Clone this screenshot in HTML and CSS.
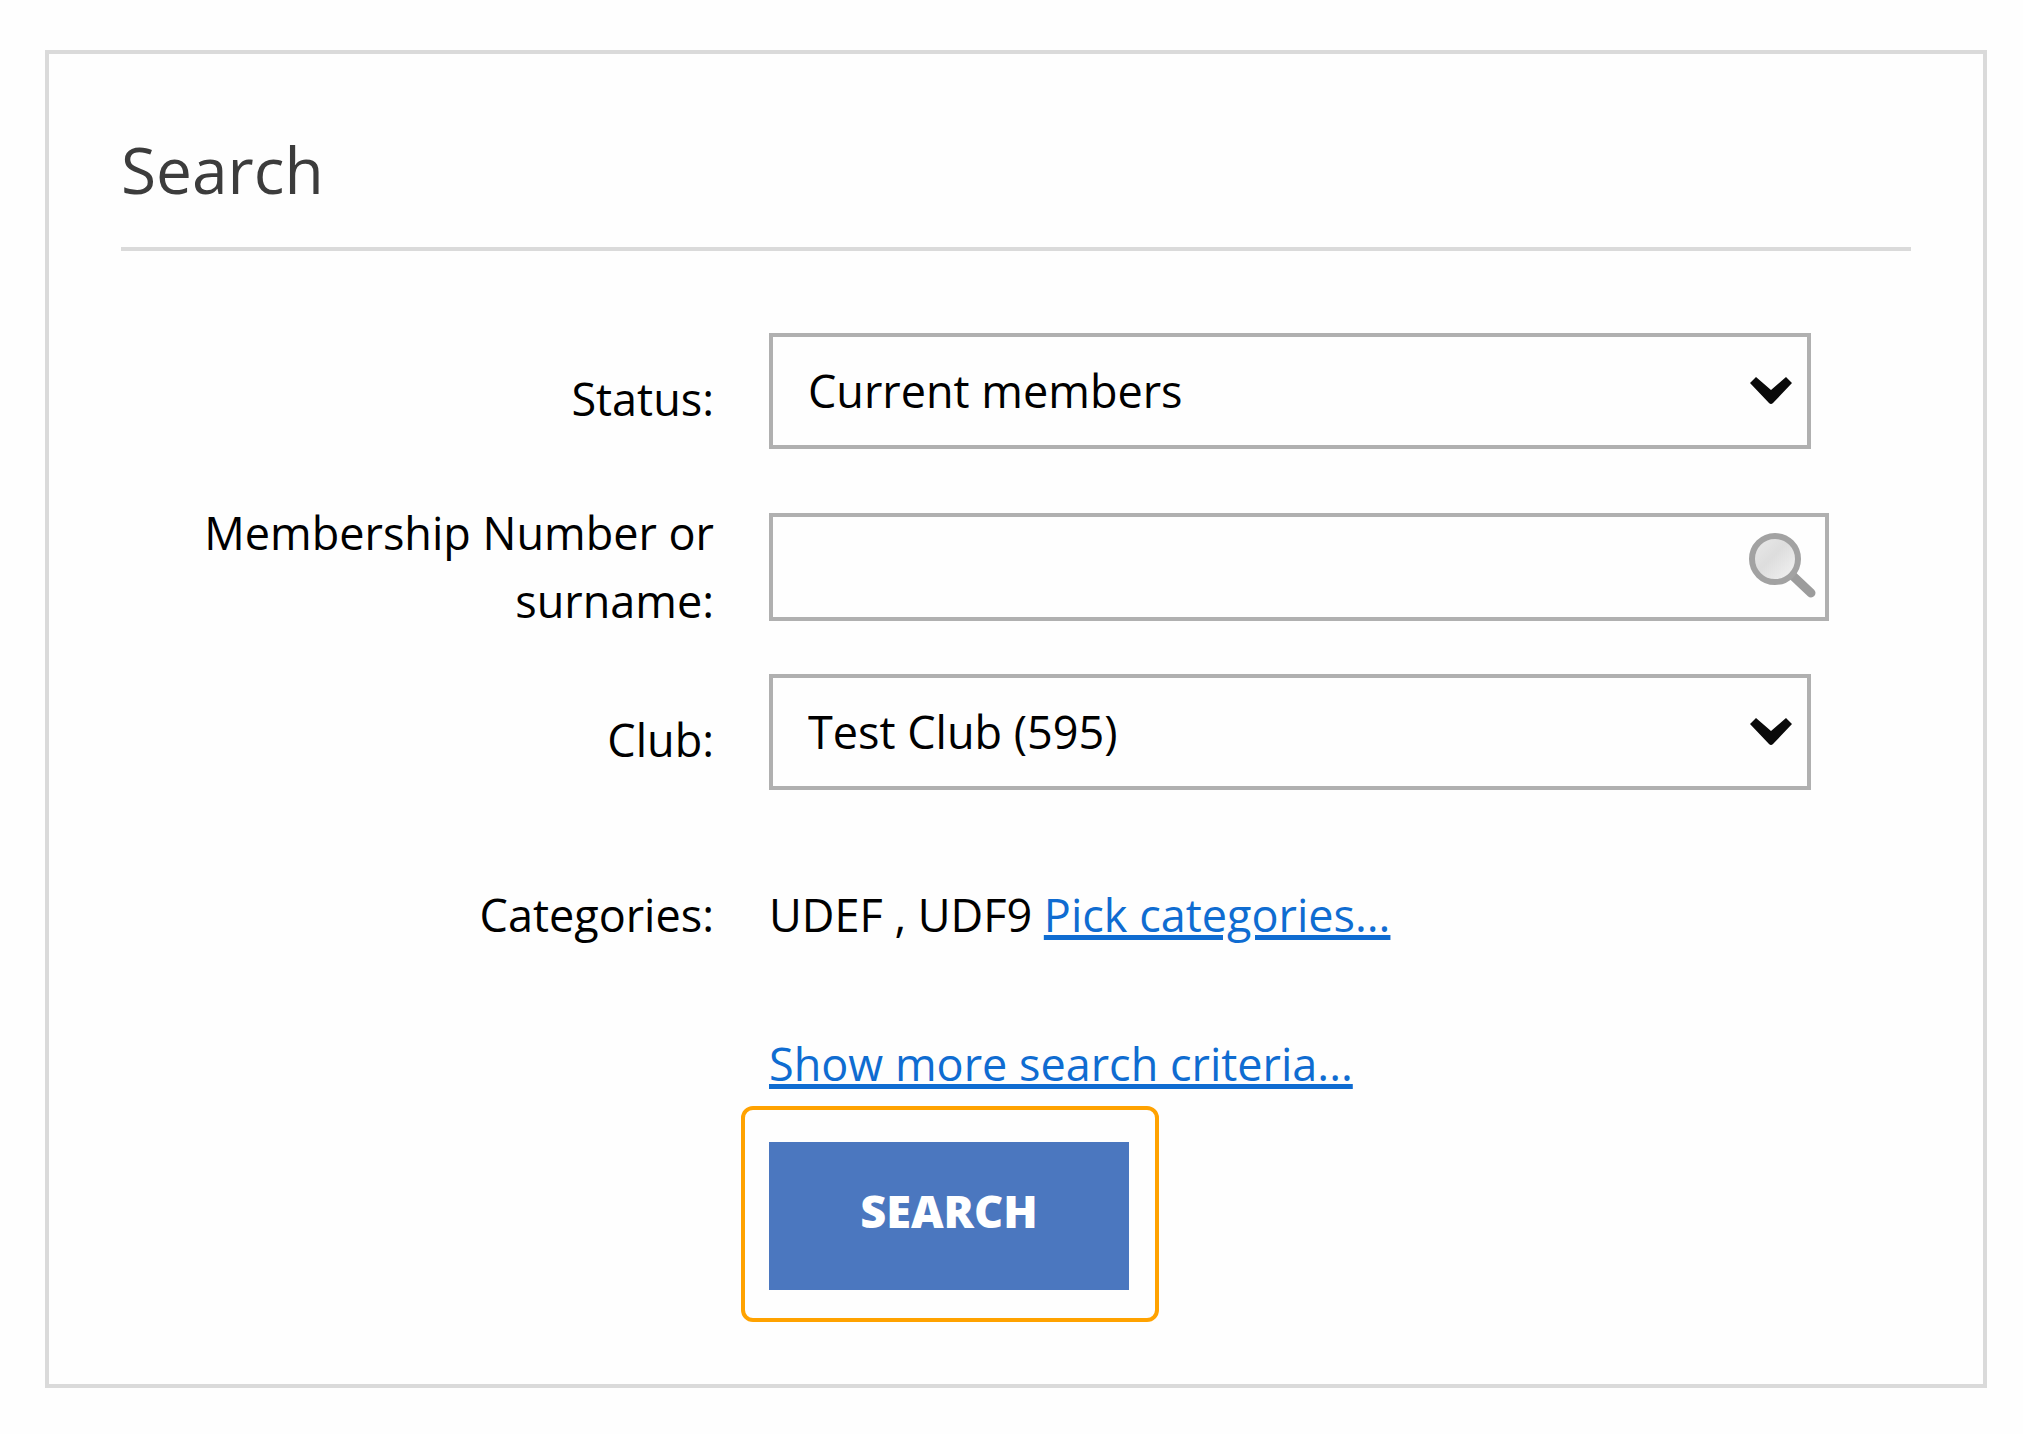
FILE: index.html
```html
<!DOCTYPE html>
<html lang="en">
<head>
<meta charset="utf-8">
<meta name="viewport" content="width=device-width, initial-scale=1">
<title>Search</title>
<link rel="stylesheet" href="styles.css">
</head>
<body>
<main class="card">
  <h1 class="title">Search</h1>
  <form class="form">
    <div class="row row-status">
      <label class="label" for="status">Status:</label>
      <div class="select-box">
        <select class="control" id="status"><option>Current members</option></select>
        <svg class="chevron" viewBox="0 0 44 30" aria-hidden="true"><path d="M7 1 L22 14 L37 1 L43 7 L24 27 Q22 29 20 27 L1 7 Z"/></svg>
      </div>
    </div>
    <div class="row row-number">
      <label class="label" for="number">Membership Number or surname:</label>
      <div class="text-box">
        <input class="control" id="number" type="text">
        <svg class="magnifier" viewBox="0 0 70 70" aria-hidden="true">
          <defs>
            <linearGradient id="lens" x1="0" y1="0" x2="1" y2="1">
              <stop offset="0" stop-color="#ebebeb"/>
              <stop offset="0.45" stop-color="#dddddd"/>
              <stop offset="1" stop-color="#f6f6f6"/>
            </linearGradient>
          </defs>
          <path d="M45 44 L63 61" stroke="#9c9c9c" stroke-width="9" stroke-linecap="round"/>
          <circle cx="27" cy="27" r="23" fill="url(#lens)" stroke="#a2a2a2" stroke-width="6"/>
        </svg>
      </div>
    </div>
    <div class="row row-club">
      <label class="label" for="club">Club:</label>
      <div class="select-box">
        <select class="control" id="club"><option>Test Club (595)</option></select>
        <svg class="chevron" viewBox="0 0 44 30" aria-hidden="true"><path d="M7 1 L22 14 L37 1 L43 7 L24 27 Q22 29 20 27 L1 7 Z"/></svg>
      </div>
    </div>
    <div class="row row-categories">
      <span class="label">Categories:</span>
      <div>UDEF , UDF9 <a class="link" href="#categories">Pick categories...</a></div>
    </div>
    <div class="row row-more">
      <div class="actions">
        <a class="link" href="#criteria">Show more search criteria...</a>
        <div class="highlight"><button class="button" type="submit">SEARCH</button></div>
      </div>
    </div>
  </form>
</main>
</body>
</html>
```

FILE: styles.css
```css
* {
  box-sizing: border-box;
}

body {
  margin: 50px 36px 46px 45px;
  background: #fefefe;
  color: #000;
  font-family: "Open Sans", "Noto Sans", sans-serif;
  font-size: 45px;
  line-height: 68px;
}

.card {
  padding: 72px 72px 94px 72px;
  border: 4px solid #dadada;
}

.title {
  margin: 0;
  padding-bottom: 33px;
  border-bottom: 4px solid #dadada;
  color: #3c3c3c;
  font-size: 64px;
  font-weight: 400;
  line-height: 88px;
}

.form {
  padding-top: 82px;
}

.row {
  display: grid;
  grid-template-columns: minmax(0, 593fr) minmax(0, 1142fr);
  column-gap: 55px;
}

.label {
  text-align: right;
}

.row-status .label,
.row-club .label {
  padding-top: 32px;
}

.row-number {
  align-items: center;
  margin-top: 50px;
}

.row-club {
  margin-top: 39px;
}

.row-categories {
  margin-top: 91px;
}

.row-more {
  margin-top: 81px;
}

.select-box,
.text-box {
  display: grid;
  align-items: center;
  width: 100%;
}

.select-box {
  max-width: 1042px;
}

.text-box {
  max-width: 1060px;
}

.control {
  grid-area: 1 / 1;
  width: 100%;
  margin: 0;
  padding: 0 35px;
  border: 4px solid #b0b0b0;
  border-radius: 0;
  background: #fefefe;
  color: inherit;
  font: inherit;
  appearance: none;
}

.select-box .control {
  height: 116px;
}

.text-box .control {
  height: 108px;
}

.chevron,
.magnifier {
  grid-area: 1 / 1;
  justify-self: end;
  pointer-events: none;
}

.chevron {
  width: 44px;
  height: 30px;
  margin-right: 18px;
  fill: #0a0a0a;
}

.magnifier {
  width: 70px;
  height: 70px;
  margin-right: 11px;
  fill: none;
}

.link {
  color: #0f6cd1;
  text-decoration-thickness: 5px;
  text-underline-offset: 3px;
}

.actions {
  grid-column: 2;
  display: flex;
  flex-direction: column;
  align-items: flex-start;
  gap: 44px;
}

.highlight {
  position: relative;
}

/* callout frame around the button */
.highlight::after {
  content: "";
  position: absolute;
  inset: -36px -30px -32px -28px;
  border: 4px solid #ffa200;
  border-radius: 12px;
  pointer-events: none;
}

.button {
  display: block;
  width: 360px;
  height: 148px;
  padding: 0 0 10px;
  border: 0;
  background: #4b77bf;
  color: #fff;
  font: inherit;
  font-weight: 800;
}
```
